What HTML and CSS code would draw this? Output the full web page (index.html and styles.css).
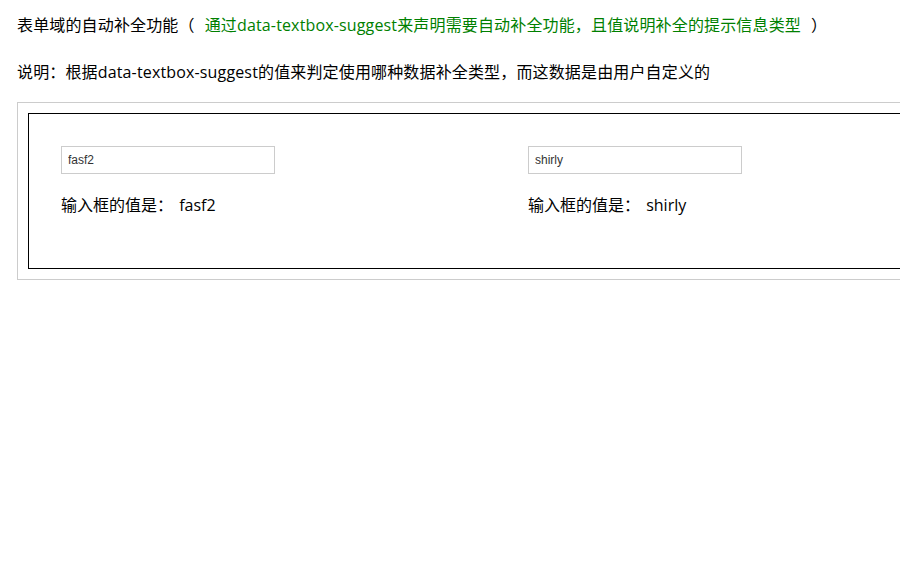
FILE: index.html
```html
<!DOCTYPE html>
<html lang="zh-CN">
<head>
<meta charset="utf-8">
<title>自动补全</title>
<link rel="stylesheet" href="styles.css">
</head>
<body>
<div class="line title">表单域的自动补全功能（<span class="green">通过data-textbox-suggest来声明需要自动补全功能，且值说明补全的提示信息类型</span><span class="close">）</span></div>
<div class="line desc">说明：根据data-textbox-suggest的值来判定使用哪种数据补全类型，而这数据是由用户自定义的</div>
<div class="outer">
  <div class="inner">
    <div class="col">
      <input class="field" type="text" value="fasf2">
      <div class="value">输入框的值是： <span class="val">fasf2</span></div>
    </div>
    <div class="col">
      <input class="field" type="text" value="shirly">
      <div class="value">输入框的值是： <span class="val">shirly</span></div>
    </div>
  </div>
</div>
</body>
</html>
```

FILE: styles.css
```css
html, body {
  margin: 0;
  padding: 0;
  background: #fff;
  overflow: hidden;
}
body {
  padding: 13px 0 0 17px;
  font-family: "Open Sans", "Noto Sans CJK SC", sans-serif;
  font-size: 16px;
  color: #000;
  width: 1000px;
}
.line {
  line-height: 24px;
  height: 24px;
  white-space: nowrap;
  letter-spacing: 0.15px;
}
.desc {
  margin-top: 23px;
}
.green {
  color: #008000;
  margin-left: 10px;
}
.close {
  margin-left: 10px;
}
.outer {
  margin-top: 18px;
  border: 1px solid #cccccc;
  padding: 10px;
  width: 960px;
}
.inner {
  border: 1px solid #000;
  padding: 32px 32px 51px;
  display: flex;
}
.col {
  width: 467px;
  flex: none;
}
.field {
  display: block;
  box-sizing: border-box;
  width: 214px;
  height: 28px;
  margin: 0;
  padding: 0 6px;
  border: 1px solid #cccccc;
  font-family: "Liberation Sans", Arial, sans-serif;
  font-size: 12px;
  color: #333;
  outline: none;
}
.value {
  margin-top: 19px;
  line-height: 24px;
}
.val {
  margin-left: 2px;
}
```
